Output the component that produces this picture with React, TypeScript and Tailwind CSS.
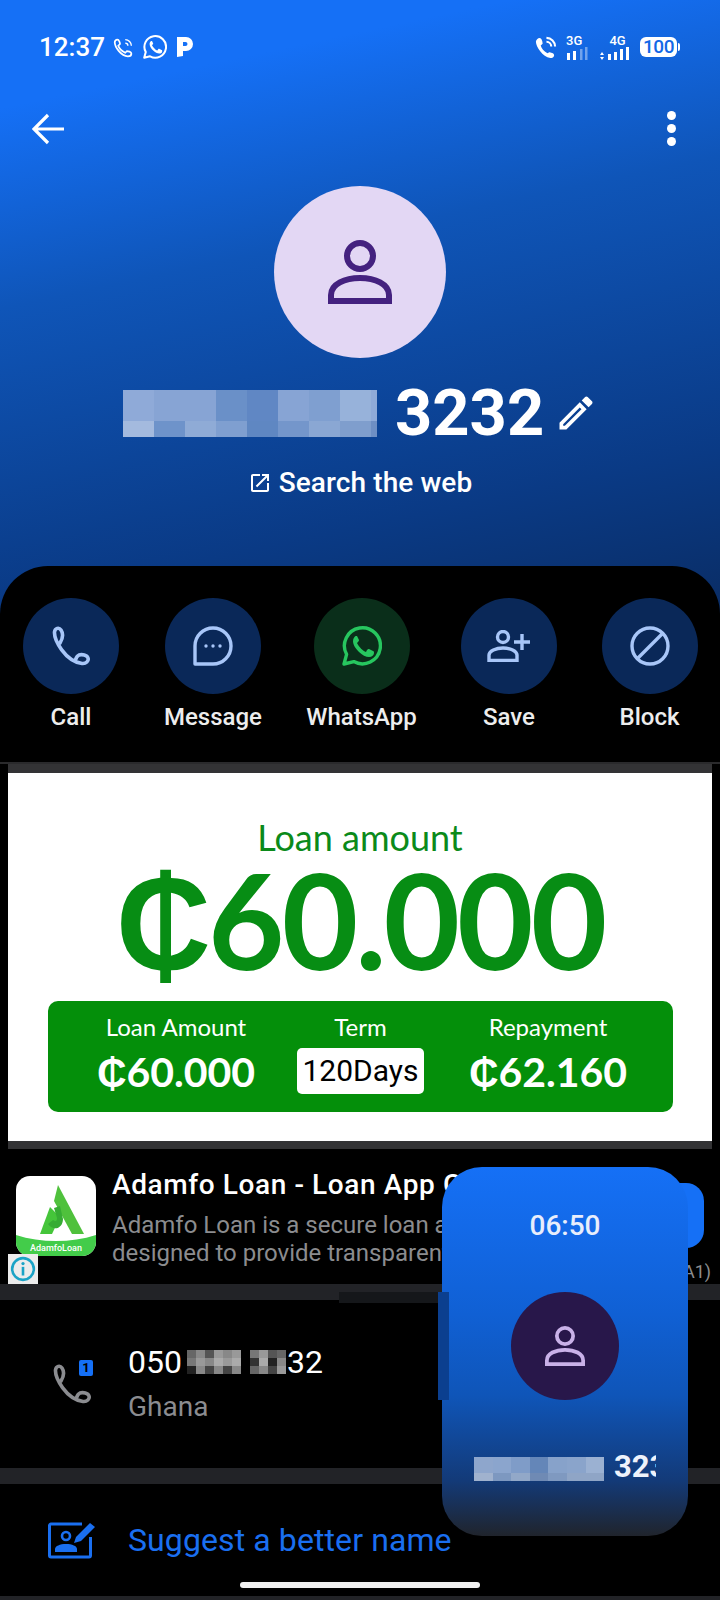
import React from 'react';

const roboto = "font-['Roboto',sans-serif]";

// mosaic cells covering the redacted name in the header
const heroTop = ['bg-[#8faad8]', 'bg-[#87a4d4]', 'bg-[#87a4d4]', 'bg-[#6a90c8]', 'bg-[#6087c4]', 'bg-[#87a4d4]', 'bg-[#7f9fd0]', 'bg-[#97b2da]'];
const heroBottom = ['bg-[#a4bade]', 'bg-[#6e93ca]', 'bg-[#8fabd6]', 'bg-[#7f9fd0]', 'bg-[#5f87c2]', 'bg-[#7496cb]', 'bg-[#8aa7d3]', 'bg-[#7f9ecd]'];
const popTop = ['bg-[#8ea6cc]', 'bg-[#8ba5cd]', 'bg-[#7f9cc8]', 'bg-[#6486b8]', 'bg-[#87a2ca]', 'bg-[#8aa4cb]', 'bg-[#9bb1d2]'];
const popBottom = ['bg-[#a0b2ce]', 'bg-[#7d98c0]', 'bg-[#92a8c8]', 'bg-[#6f8ab4]', 'bg-[#7f99c0]', 'bg-[#8fa5c6]', 'bg-[#8fa5c6]'];
const phoneCells = [
  ['bg-[#666]', 'bg-[#888]', 'bg-[#555]', 'bg-[#999]', 'bg-[#888]', 'bg-[#999]', 'bg-black', 'bg-[#777]', 'bg-[#999]', 'bg-[#555]', 'bg-[#666]'],
  ['bg-[#777]', 'bg-[#999]', 'bg-[#888]', 'bg-[#aaa]', 'bg-[#999]', 'bg-[#aaa]', 'bg-black', 'bg-[#333]', 'bg-[#aaa]', 'bg-[#222]', 'bg-[#888]'],
  ['bg-[#222]', 'bg-[#888]', 'bg-[#444]', 'bg-[#888]', 'bg-[#444]', 'bg-[#888]', 'bg-black', 'bg-[#666]', 'bg-[#888]', 'bg-[#444]', 'bg-[#999]'],
];

const PersonIcon = ({ className }: { className?: string }) => (
  <svg viewBox="0 0 64 64" fill="none" stroke="currentColor" strokeWidth="6" className={className}>
    <circle cx="32" cy="16" r="13" />
    <path d="M3 61V55C3 44 17 38 32 38S61 44 61 55v6z" />
  </svg>
);

const PhoneIcon = ({ className }: { className?: string }) => (
  <svg viewBox="0 0 40 40" fill="none" stroke="currentColor" strokeWidth="3.6" strokeLinejoin="round" strokeLinecap="round" className={className}>
    <path d="M9 17C12 12 12 7 10 4 8 1 4 2 3.5 6 3 14 14 35 31 37.5 35 38 38 35 37 32 36 29 31 28 28 29 26 30 25 32 24.5 34" />
  </svg>
);

const WhatsAppIcon = ({ className }: { className?: string }) => (
  <svg viewBox="0 0 40 40" className={className}>
    <path d="M2 38l2.6-9.6A18 18 0 1 1 11.8 35.6z" fill="none" stroke="currentColor" strokeWidth="3.4" strokeLinejoin="round" />
    <path d="M14 10c-1 0-3 2-3 5 0 4 3 8 6 11s7 5 10 5c3 0 5-2 5-4 0-1 0-2-1-2l-4-2c-1 0-1 0-2 1l-1 2c-3-1-7-5-9-9l1-1c1-1 1-2 1-2l-2-4h-1z" fill="currentColor" />
  </svg>
);

const Action = ({ label, tone, children, cx }: { label: string; tone: string; children: React.ReactNode; cx: string }) => (
  <div className={`flex flex-col items-center ${cx}`}>
    <div className={`w-24 h-24 rounded-full flex items-center justify-center ${tone}`}>{children}</div>
    <span className={`mt-2 text-[24px] leading-[30px] font-medium text-[#ededed] whitespace-nowrap ${roboto}`}>{label}</span>
  </div>
);

export default function App() {
  return (
    <div className={`relative w-[720px] h-[1600px] overflow-hidden bg-black ${roboto}`}>
      {/* header */}
      <div className="h-[620px] bg-[linear-gradient(168deg,#1570f6_0%,#1570f6_14%,#0f55b8_40%,#0a3a85_78%,#0a2c63_100%)] text-white">
        <div className="flex items-center justify-between pl-[39px] pr-[40px] pt-[32px] h-[62px]">
          <div className="flex items-center">
            <span className="text-[26px] leading-[30px] font-medium">12:37</span>
            <svg viewBox="0 0 24 24" fill="none" stroke="white" strokeWidth="2" className="w-[21px] h-[21px] ml-[8px]">
              <path d="M5 3c2 0 3 4 3 5l-2 2c1 3 4 6 8 8l2-2c1 0 5 1 5 3 0 2-2 3-4 3C9 22 2 11 2 6c0-1 1-3 3-3z" />
              <path d="M14 3a7 7 0 0 1 7 7M14 7a3 3 0 0 1 3 3" strokeWidth="1.6" />
            </svg>
            <WhatsAppIcon className="w-[24px] h-[24px] ml-[9px]" />
            <svg viewBox="0 0 16 20" className="w-[16px] h-[20px] ml-[10px]">
              <path d="M0 0h9a7 7 0 0 1 0 14H6v5l-6 1z M6 5v4h2.5a2 2 0 0 0 0-4z" fill="white" fillRule="evenodd" />
            </svg>
          </div>
          <div className="flex items-center">
            <svg viewBox="0 0 24 24" fill="white" className="w-[23px] h-[23px]">
              <path d="M6 2c2 0 3 4 3 6l-2 2c1 3 3 6 7 8l2-1c1 0 5 1 5 3 0 2-2 3-4 3C9 22 2 11 2 6c0-2 2-4 4-4z" />
              <path d="M13 2a9 9 0 0 1 9 9M13 6a5 5 0 0 1 5 5" stroke="white" strokeWidth="2.2" fill="none" />
            </svg>
            <div className="flex flex-col items-start ml-[9px] w-[24px]">
              <span className="text-[13px] leading-[11px] font-medium">3G</span>
              <svg viewBox="0 0 22 13" className="w-[22px] h-[13px] mt-[1px]">
                <rect x="1" y="6" width="3" height="7" fill="white" /><rect x="7" y="4" width="3" height="9" fill="white" />
                <rect x="14" y="2" width="2.5" height="11" fill="white" fillOpacity=".4" /><rect x="19" y="0" width="2.5" height="13" fill="white" fillOpacity=".4" />
              </svg>
            </div>
            <div className="flex flex-col items-center ml-[10px] w-[30px]">
              <span className="text-[13px] leading-[11px] font-medium ml-[5px]">4G</span>
              <svg viewBox="0 0 30 13" className="w-[30px] h-[13px] mt-[1px]">
                <path d="M2 5l2 3H0zM2 13l-2-3h4z" fill="white" />
                <rect x="8" y="7" width="3" height="6" fill="white" /><rect x="14" y="5" width="3" height="8" fill="white" />
                <rect x="20" y="2" width="3" height="11" fill="white" /><rect x="26" y="0" width="3" height="13" fill="white" />
              </svg>
            </div>
            <div className="ml-[10px] w-[37px] h-[20px] rounded-[6px] bg-white flex items-center justify-center">
              <span className="text-[19px] leading-[20px] font-medium text-[#1268e6] tracking-[-0.5px]">100</span>
            </div>
            <div className="w-[2px] h-[8px] bg-white ml-[1px] rounded-r" />
          </div>
        </div>

        <div className="flex items-center justify-between pl-[32px] pr-[44px] mt-[49px]">
          <svg viewBox="0 0 32 32" fill="none" stroke="white" strokeWidth="3.2" className="w-8 h-8">
            <path d="M32 16H3M16 2L2 16l14 14" />
          </svg>
          <div className="flex flex-col gap-[4px]">
            <span className="w-[9px] h-[9px] rounded-full bg-white" />
            <span className="w-[9px] h-[9px] rounded-full bg-white" />
            <span className="w-[9px] h-[9px] rounded-full bg-white" />
          </div>
        </div>

        <div className="flex justify-center mt-[40px]">
          <div className="w-[172px] h-[172px] rounded-full bg-[#e3d7f4] flex items-center justify-center">
            <PersonIcon className="w-[64px] h-[64px] text-[#44217f]" />
          </div>
        </div>

        <div className="flex items-center pl-[123px] mt-[27px] h-[56px]">
          <div className="w-[254px] shrink-0 overflow-hidden">
            <div className="flex h-[31px]">{heroTop.map((c, i) => <div key={i} className={`w-[31px] shrink-0 ${c}`} />)}<div className="w-[6px] shrink-0 bg-[#8faad8]" /></div>
            <div className="flex h-[16px]">{heroBottom.map((c, i) => <div key={i} className={`w-[31px] shrink-0 ${c}`} />)}<div className="w-[6px] shrink-0 bg-[#6e8fc4]" /></div>
          </div>
          <span className="ml-[18px] text-[65px] leading-[56px] font-bold">3232</span>
          <svg viewBox="0 0 24 24" fill="white" className="ml-[10px] w-[44px] h-[44px]">
            <path d="M14.06 9.02l.92.92L5.92 19H5v-.92l9.06-9.06M17.66 3c-.25 0-.51.1-.7.29l-1.83 1.83 3.75 3.75 1.83-1.83c.39-.39.39-1.02 0-1.41l-2.34-2.34c-.2-.2-.45-.29-.71-.29zm-3.6 3.19L3 17.25V21h3.75L17.81 9.94l-3.75-3.75z" />
          </svg>
        </div>

        <div className="flex items-center justify-center mt-[24px] text-[28px] leading-[36px] font-medium tracking-[0.1px]">
          <svg viewBox="0 0 24 24" fill="white" className="w-[24px] h-[24px] mr-[7px]">
            <path d="M19 19H5V5h7V3H5c-1.11 0-2 .9-2 2v14c0 1.1.89 2 2 2h14c1.1 0 2-.9 2-2v-7h-2v7zM14 3v2h3.59l-9.83 9.83 1.41 1.41L19 6.41V10h2V3h-7z" />
          </svg>
          <span>Search the web</span>
        </div>
      </div>

      {/* action sheet */}
      <div className="absolute left-0 top-[566px] w-full h-[196px] bg-black rounded-t-[48px]">
        <div className="relative w-full pt-[32px] flex">
          <Action label="Call" tone="bg-[#0a2858]" cx="w-[142px]">
            <PhoneIcon className="w-10 h-10 text-[#a8c6f8]" />
          </Action>
          <Action label="Message" tone="bg-[#0a2858]" cx="w-[142px]">
            <svg viewBox="0 0 40 40" fill="none" stroke="#a8c6f8" strokeWidth="3.4" className="w-10 h-10">
              <path d="M2 38V20A18 18 0 0 1 20 2a18 18 0 0 1 18 18 18 18 0 0 1-18 18z" strokeLinejoin="round" />
              <circle cx="13" cy="20" r="1.7" fill="#a8c6f8" stroke="none" /><circle cx="20" cy="20" r="1.7" fill="#a8c6f8" stroke="none" /><circle cx="27" cy="20" r="1.7" fill="#a8c6f8" stroke="none" />
            </svg>
          </Action>
          <Action label="WhatsApp" tone="bg-[#0a2e1a]" cx="w-[155px]">
            <WhatsAppIcon className="w-10 h-10 text-[#27c65f]" />
          </Action>
          <Action label="Save" tone="bg-[#0a2858]" cx="w-[140px]">
            <svg viewBox="0 0 44 32" fill="none" stroke="#a8c6f8" strokeWidth="3.4" className="w-11 h-8">
              <circle cx="16" cy="7" r="5.5" />
              <path d="M2 30.5V25c0-4 7-7 14-7s14 3 14 7v5.5z" />
              <path d="M35 4v16M27 12h16" />
            </svg>
          </Action>
          <Action label="Block" tone="bg-[#0a2858]" cx="w-[141px]">
            <svg viewBox="0 0 40 40" fill="none" stroke="#a8c6f8" strokeWidth="3.4" className="w-10 h-10">
              <circle cx="20" cy="20" r="18" />
              <path d="M7 33L33 7" />
            </svg>
          </Action>
        </div>
      </div>

      {/* ad banner */}
      <div className="absolute left-0 top-[762px] w-full">
        <div className="h-[2px] bg-[#2a2a2c]" />
        <div className="mx-[8px] h-[9px] bg-[#333335]" />
        <div className="mx-[8px] h-[368px] bg-white flex flex-col items-center">
          <span className="mt-[44px] text-[36px] leading-[40px] text-[#0b8a1a] font-['Lato',sans-serif]">Loan amount</span>
          <span className="text-[132px] leading-[124px] text-[#078d14] font-['Lato',sans-serif] font-bold tracking-[-3px] whitespace-nowrap"><span className={roboto}>₵</span>60.000</span>
          <div className="mt-[14px] w-[625px] h-[111px] rounded-[10px] bg-[#048f0a] flex text-white font-['Lato',sans-serif]">
            <div className="w-[257px] flex flex-col items-center pt-[11px]">
              <span className="text-[24px] leading-[30px]">Loan Amount</span>
              <span className="mt-[5px] text-[41px] leading-[50px] font-bold whitespace-nowrap"><span className={roboto}>₵</span>60.000</span>
            </div>
            <div className="w-[112px] flex flex-col items-center pt-[11px]">
              <span className="text-[24px] leading-[30px]">Term</span>
              <span className="mt-[6px] w-[127px] shrink-0 h-[46px] rounded-[5px] bg-white text-black text-[30px] leading-[46px] text-center whitespace-nowrap font-['Roboto',sans-serif]">120Days</span>
            </div>
            <div className="flex-1 flex flex-col items-center pt-[11px] pl-[7px]">
              <span className="text-[24px] leading-[30px]">Repayment</span>
              <span className="mt-[5px] text-[41px] leading-[50px] font-bold whitespace-nowrap"><span className={roboto}>₵</span>62.160</span>
            </div>
          </div>
        </div>
        <div className="mx-[8px] h-[8px] bg-[#333335]" />
      </div>

      {/* app row */}
      <div className="absolute left-0 top-[1149px] w-full h-[135px]">
        <div className="relative h-full pl-[16px] pt-[27px] flex">
          <div className="w-[80px] h-[80px] rounded-[14px] overflow-hidden bg-white shrink-0 relative">
            <svg viewBox="0 0 80 80" className="w-full h-full">
              <path d="M42 9l26 49H56L38 25z" fill="#4fc13c" />
              <path d="M34 31L24 58h12l8-17z" fill="#45c53a" />
              <path d="M44 30l3 13c0 9-9 13-15 5l5-4c3 2 4 1 4-2l-3-10z" fill="#36ac33" />
              <path d="M0 59c25 8 55 8 80 0v21H0z" fill="#43cc4a" />
            </svg>
            <span className="absolute bottom-[2px] left-0 w-full text-center text-[9px] leading-[12px] text-white font-medium">AdamfoLoan</span>
          </div>
          <div className="ml-[16px] mt-[-8px] w-[540px] overflow-hidden">
            <div className="text-[28px] leading-[34px] font-medium tracking-[0.6px] text-white whitespace-nowrap">Adamfo Loan - Loan App Ghana</div>
            <div className="mt-[9px] text-[24px] leading-[28px] text-[#8b8c8f] whitespace-nowrap">Adamfo Loan is a secure loan app</div>
            <div className="text-[24px] leading-[28px] text-[#8b8c8f] whitespace-nowrap">designed to provide transparent</div>
          </div>
          <div className="absolute left-[8px] top-[105px] w-[30px] h-[30px] bg-[#ececec] flex items-center justify-center">
            <svg viewBox="0 0 24 24" fill="none" className="w-[26px] h-[26px]">
              <circle cx="12" cy="12" r="10" stroke="#1ba3c6" strokeWidth="2.4" />
              <rect x="10.8" y="10" width="2.4" height="8" fill="#1ba3c6" />
              <circle cx="12" cy="7" r="1.5" fill="#1ba3c6" />
            </svg>
          </div>
          <div className="absolute left-[640px] top-[34px] w-[64px] h-[65px] rounded-[18px] bg-[#1570f6]" />
          <span className="absolute left-[683px] top-[111px] text-[18px] leading-[24px] text-[#8b8c8f]">A1)</span>
        </div>
      </div>

      {/* phone row */}
      <div className="absolute left-0 top-[1284px] w-full">
        <div className="h-[16px] bg-[#222327]" />
        <div className="h-[168px] flex items-center pl-[52px]">
          <div className="relative w-[40px] h-[44px] mt-[-2px] mr-[36px]">
            <PhoneIcon className="w-10 h-10 mt-[3px] text-[#8b8c90]" />
            <span className="absolute left-[27px] top-[-1px] w-[14px] h-[16px] rounded-[2px] bg-[#1570f6] text-[13px] leading-[16px] text-center font-bold text-black">1</span>
          </div>
          <div className="mt-[-1px]">
            <div className="flex items-center text-[32px] leading-[40px] text-white">
              <span>050</span>
              <div className="ml-[5px] mr-[1px] w-[99px] h-[24px] flex flex-col">
                {phoneCells.map((row, r) => (
                  <div key={r} className="flex h-[8px]">{row.map((c, i) => <div key={i} className={`w-[9px] ${c}`} />)}</div>
                ))}
              </div>
              <span>32</span>
            </div>
            <div className="mt-[6px] text-[28px] leading-[38px] text-[#8b8c90]">Ghana</div>
          </div>
        </div>
        <div className="h-[16px] bg-[#222327]" />
        <div className="h-[112px] flex items-center pl-[48px]">
          <svg viewBox="0 0 48 38" className="w-[48px] h-[38px] mr-[32px]">
            <path d="M34 3H3a1.5 1.5 0 0 0-1.5 1.5v30A1.5 1.5 0 0 0 3 36h38a1.5 1.5 0 0 0 1.5-1.5V16" fill="none" stroke="#1a6ff0" strokeWidth="3" />
            <circle cx="18" cy="15" r="4" fill="none" stroke="#1a6ff0" strokeWidth="2.6" />
            <path d="M7 31v-3c0-3 5-5 11-5s11 2 11 5v3z" fill="#1a6ff0" />
            <path d="M26 22l2-6L42 2l5 4-14 14z" fill="#1a6ff0" />
          </svg>
          <span className="text-[32px] leading-[40px] tracking-[0.1px] text-[#1a6ff0] whitespace-nowrap">Suggest a better name</span>
        </div>
      </div>

      {/* home indicator and bottom edge */}
      <div className="absolute left-[240px] top-[1582px] w-[240px] h-[6px] rounded-full bg-[#f0f0f0]" />
      <div className="absolute left-0 top-[1596px] w-full h-[4px] bg-[#222327]" />

      {/* floating call window */}
      <div className="absolute left-[339px] top-[1292px] w-[110px] h-[11px] bg-[#15171a]" />
      <div className="absolute left-[442px] top-[1167px] w-[246px] h-[369px] rounded-[40px] bg-[linear-gradient(180deg,#1570f6_0%,#1060d4_40%,#0f55b8_62%,#133a78_85%,#20242c_100%)] overflow-hidden flex flex-col items-center text-white">
        <span className="mt-[39px] text-[28px] leading-[40px] font-medium text-[#e8eefc]">06:50</span>
        <div className="mt-[46px] w-[108px] h-[108px] rounded-full bg-[#28174a] flex items-center justify-center">
          <PersonIcon className="w-[40px] h-[40px] text-[#c9b1e8]" />
        </div>
        <div className="mt-[56px] w-full pl-[32px] flex items-center h-[26px]">
          <div className="w-[130px] shrink-0">
            <div className="flex h-[16px]">{popTop.map((c, i) => <div key={i} className={`w-[18.6px] shrink-0 ${c}`} />)}</div>
            <div className="flex h-[8px]">{popBottom.map((c, i) => <div key={i} className={`w-[18.6px] shrink-0 ${c}`} />)}</div>
          </div>
          <div className="ml-[10px] w-[42px] overflow-hidden">
            <span className="text-[31px] leading-[26px] font-bold text-[#eef2fb] whitespace-nowrap">3232</span>
          </div>
        </div>
      </div>
      <div className="absolute left-[438px] top-[1292px] w-[11px] h-[108px] bg-[#0b3f8f]" />
    </div>
  );
}
